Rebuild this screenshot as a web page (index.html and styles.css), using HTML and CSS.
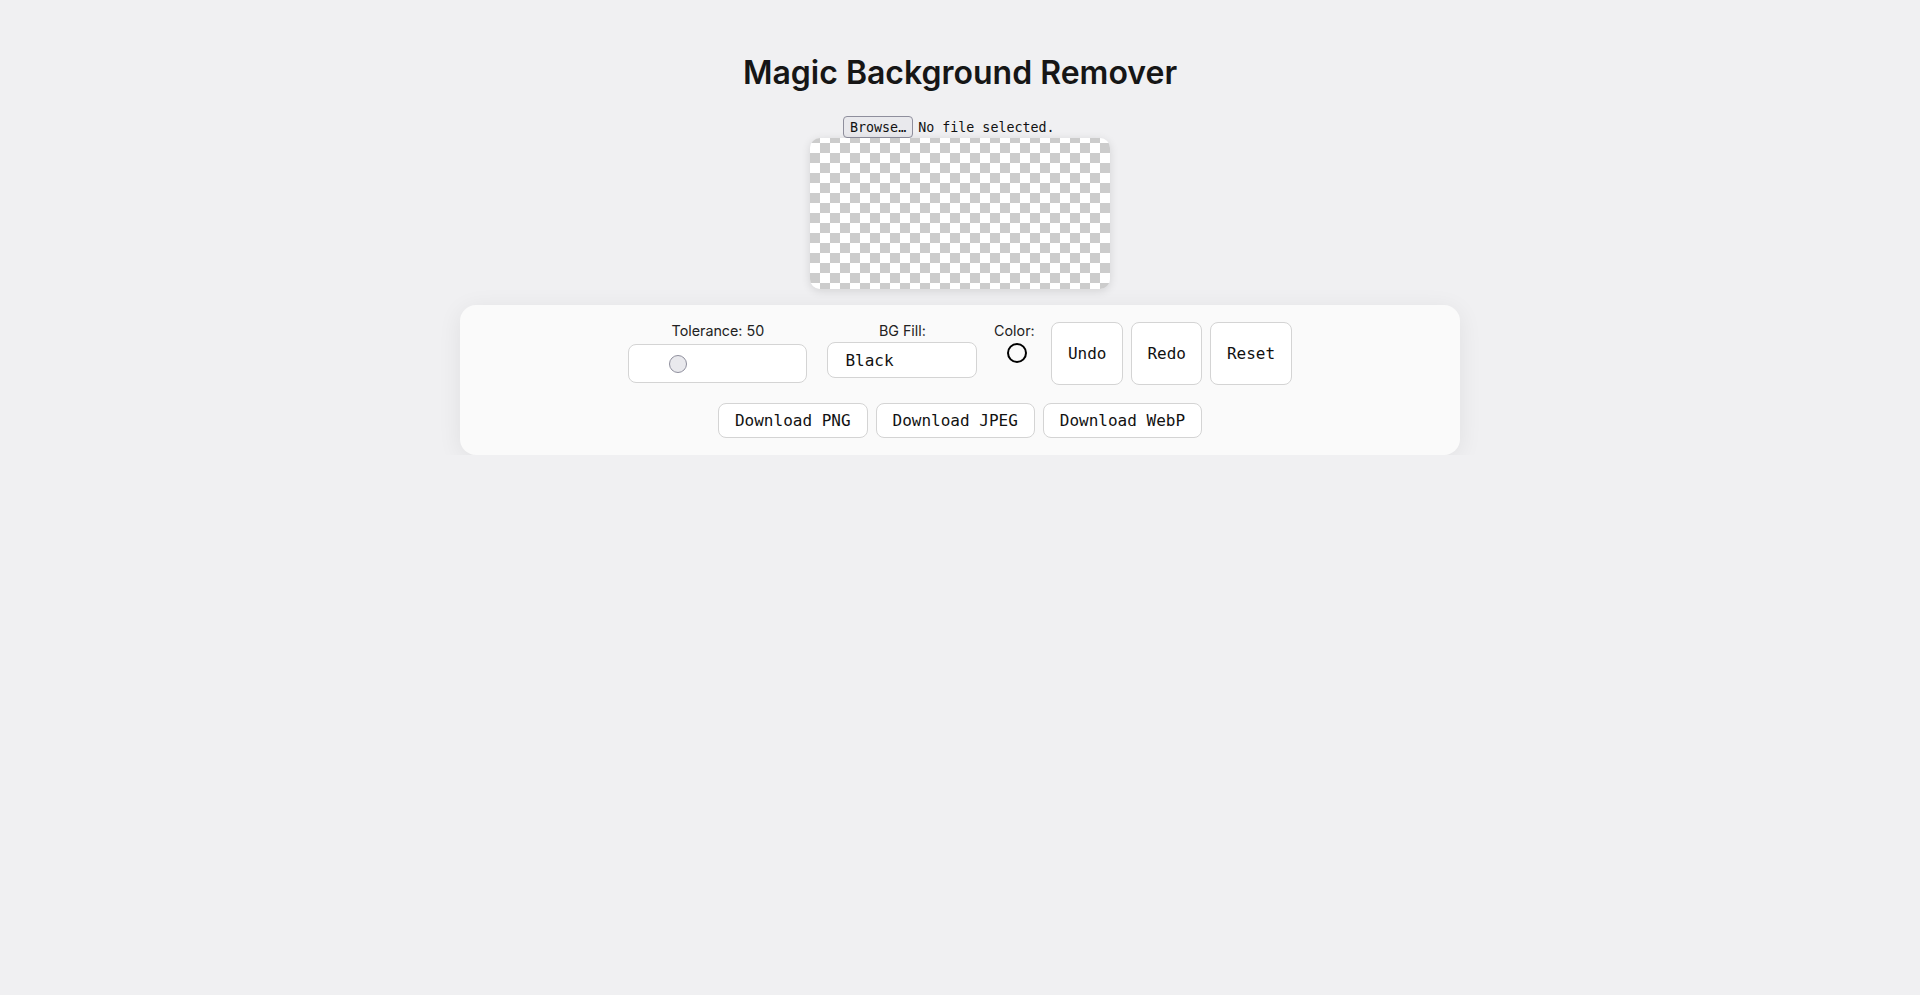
FILE: index.html
```
<!DOCTYPE html>
<html lang="en">
<head>
  <meta charset="UTF-8">
  <title>Magic Background Remover</title>
  <link rel="stylesheet" href="styles.css">
</head>
<body>

<div class="app">
  <h1>Magic Background Remover</h1>

  <label class="file-input">
    <span class="file-btn">Browse…</span>
    <span class="file-name" id="fileName">No file selected.</span>
  </label>

  <canvas id="canvas" width="300" height="150"></canvas>

  <div class="panel">
    <div class="controls">
      <div class="group tolerance">
        <label for="tolerance">Tolerance: <span id="tolValue">50</span></label>
        <input type="range" id="tolerance" min="0" max="200" value="50">
      </div>
      <div class="group">
        <label for="bgFill">BG Fill:</label>
        <select id="bgFill">
          <option>Black</option>
          <option>White</option>
          <option>Transparent</option>
        </select>
      </div>
      <div class="group color">
        <label>Color:</label>
        <span class="swatch"></span>
      </div>
      <div class="actions">
        <button class="btn tall">Undo</button>
        <button class="btn tall">Redo</button>
        <button class="btn tall">Reset</button>
      </div>
    </div>
    <div class="downloads">
      <button class="btn">Download PNG</button>
      <button class="btn">Download JPEG</button>
      <button class="btn">Download WebP</button>
    </div>
  </div>
</div>

<script>
  const tol = document.getElementById('tolerance');
  tol.addEventListener('input', () => {
    document.getElementById('tolValue').textContent = tol.value;
  });
</script>

</body>
</html>
```

FILE: styles.css
```
body {
  margin: 0;
  font-family: 'Inter', 'Noto Sans', sans-serif;
  background-color: #f0f0f2;
  color: #161616;
}
.app {
  display: flex;
  flex-direction: column;
  align-items: center;
}
h1 {
  font-size: 32px;
  font-weight: 600;
  margin: 53px 0 24px;
  line-height: 39px;
  color: #161616;
}
.file-input {
  display: flex;
  align-items: center;
  gap: 5px;
  width: 234px;
  height: 22px;
  font-family: 'DejaVu Sans Mono', monospace;
  font-size: 13.33px;
  color: #111;
}
.file-btn {
  display: flex;
  align-items: center;
  height: 20px;
  padding: 0 6px;
  background: #e9e9ed;
  border: 1px solid #8f8f9d;
  border-radius: 4px;
}
#canvas {
  display: block;
  width: 300px;
  height: 151px;
  border-radius: 10px;
  background: repeating-conic-gradient(#cccccc 0 25%, #ffffff 0 50%) 0 5px / 20px 20px;
  box-shadow: 0 2px 10px rgba(0, 0, 0, 0.12);
}
.panel {
  box-sizing: border-box;
  width: 1000px;
  margin-top: 16px;
  padding: 17px;
  background: #fafafa;
  border-radius: 16px;
  box-shadow: 0 4px 24px rgba(0, 0, 0, 0.07);
  display: flex;
  flex-direction: column;
  align-items: center;
  gap: 18px;
}
.controls {
  display: flex;
  justify-content: center;
  gap: 16px;
}
.group {
  display: flex;
  flex-direction: column;
  align-items: center;
  font-size: 14.3px;
  line-height: 17px;
  color: #222;
}
.tolerance {
  margin-right: 4px;
}
.tolerance input {
  -webkit-appearance: none;
  appearance: none;
  box-sizing: border-box;
  width: 179px;
  height: 39px;
  margin: 5px 0 2px;
  padding: 0;
  background: #fff;
  border: 1px solid #d4d4d4;
  border-radius: 8px;
}
.tolerance input::-webkit-slider-runnable-track {
  height: 18px;
  background: transparent;
}
.tolerance input::-webkit-slider-thumb {
  -webkit-appearance: none;
  width: 18px;
  height: 18px;
  border-radius: 50%;
  background: #e9e9ed;
  border: 1px solid #8f8f9d;
  box-sizing: border-box;
}
select {
  -webkit-appearance: none;
  appearance: none;
  width: 150px;
  height: 36px;
  margin-top: 3px;
  padding: 0 17px;
  font-family: 'DejaVu Sans Mono', monospace;
  font-size: 16px;
  color: #111;
  background: #fff;
  border: 1px solid #d4d4d4;
  border-radius: 8px;
}
.color {
  width: 42px;
}
.swatch {
  box-sizing: border-box;
  width: 20px;
  height: 20px;
  margin: 4px 0 0 6px;
  border: 2px solid #000;
  border-radius: 50%;
}
.actions {
  display: flex;
  gap: 8px;
}
.btn {
  font-family: 'DejaVu Sans Mono', monospace;
  font-size: 16px;
  line-height: 19px;
  color: #111;
  background: #fff;
  border: 1px solid #d4d4d4;
  border-radius: 8px;
  padding: 7px 16px;
  cursor: pointer;
}
.btn.tall {
  padding: 0 15.5px;
}
.downloads {
  display: flex;
  gap: 8px;
}
```
